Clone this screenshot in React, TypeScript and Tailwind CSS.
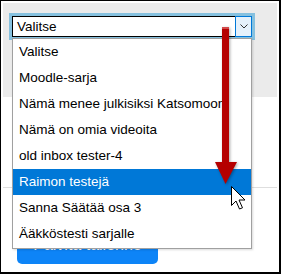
const items = [
  "Valitse",
  "Moodle-sarja",
  "Nämä menee julkisiksi Katsomoon",
  "Nämä on omia videoita",
  "old inbox tester-4",
  "Raimon testejä",
  "Sanna Säätää osa 3",
  "Ääkköstesti sarjalle",
];

const font = { fontFamily: '"Liberation Sans", Arial, sans-serif' };

export default function App() {
  return (
    <div className="relative h-[275px] w-[282px] bg-white" style={font}>
      <div className="flex h-[274px] w-[281px] flex-col border-t border-l border-r-2 border-b-2 border-black bg-white p-[2px]">
        {/* top panel with the select */}
        <div className="h-[94px] bg-[#ebebeb] pl-[6px] pt-[10px]">
          <div className="h-[27px] w-[246px] border-[3px] border-[#86c1df]">
            <div className="flex h-[21px] items-center">
              <div className="flex h-full flex-1 items-center border-y border-l border-black bg-white pl-[4px] text-[13.5px] leading-none text-black">
                Valitse
              </div>
              <div className="flex h-full w-[17px] items-center justify-center border border-[#0078d7] bg-[#e5f1fb]">
                <svg width="8" height="5" viewBox="0 0 8 5">
                  <path d="M0.5 0.5 L4 4 L7.5 0.5" fill="none" stroke="#333" strokeWidth="1" />
                </svg>
              </div>
            </div>
          </div>
        </div>

        <div className="h-[90px]" />
        <div className="h-px bg-[#dedede]" />

        <div className="pl-[14px] pt-[38px]">
          <div className="flex h-[38px] w-[141px] items-center justify-center rounded-[5px] bg-[#0d84f7] text-[16px] text-white">
            Päivitä tallenne
          </div>
        </div>
      </div>

      {/* open dropdown list */}
      <div className="absolute left-[12px] top-[38px] w-[240px] border border-[#a0a0a0] bg-white pb-[1px] shadow-[1px_1px_2px_rgba(0,0,0,0.15)]">
        {items.map((it) => (
          <div
            key={it}
            className={
              it === "Raimon testejä"
                ? "flex h-[26px] items-center bg-[#0078d7] pl-[6px] text-[13.5px] text-white"
                : "flex h-[26px] items-center pl-[6px] text-[13.5px] text-black"
            }
          >
            {it}
          </div>
        ))}
      </div>

      {/* red annotation arrow */}
      <svg
        className="absolute left-[208px] top-[22px]"
        width="36"
        height="168"
        viewBox="0 0 36 168"
        style={{ filter: "drop-shadow(1px 1px 1.5px rgba(0,0,0,0.35))" }}
      >
        <rect x="14" y="5" width="7" height="137" fill="#b50000" />
        <rect x="14" y="5" width="7" height="2" fill="#d24a4a" />
        <path d="M7 140 L29 140 L17.5 162 Z" fill="#b50000" />
      </svg>

      {/* mouse pointer */}
      <svg className="absolute left-[231px] top-[186px]" width="17" height="25" viewBox="0 0 17 25">
        <path
          d="M0.5 0.5 L0.5 19.5 L5 15 L8.5 23 L11.5 21.8 L8 14 L14 14 Z"
          fill="#fff"
          stroke="#000"
          strokeWidth="1"
          strokeLinejoin="miter"
        />
      </svg>
    </div>
  );
}
